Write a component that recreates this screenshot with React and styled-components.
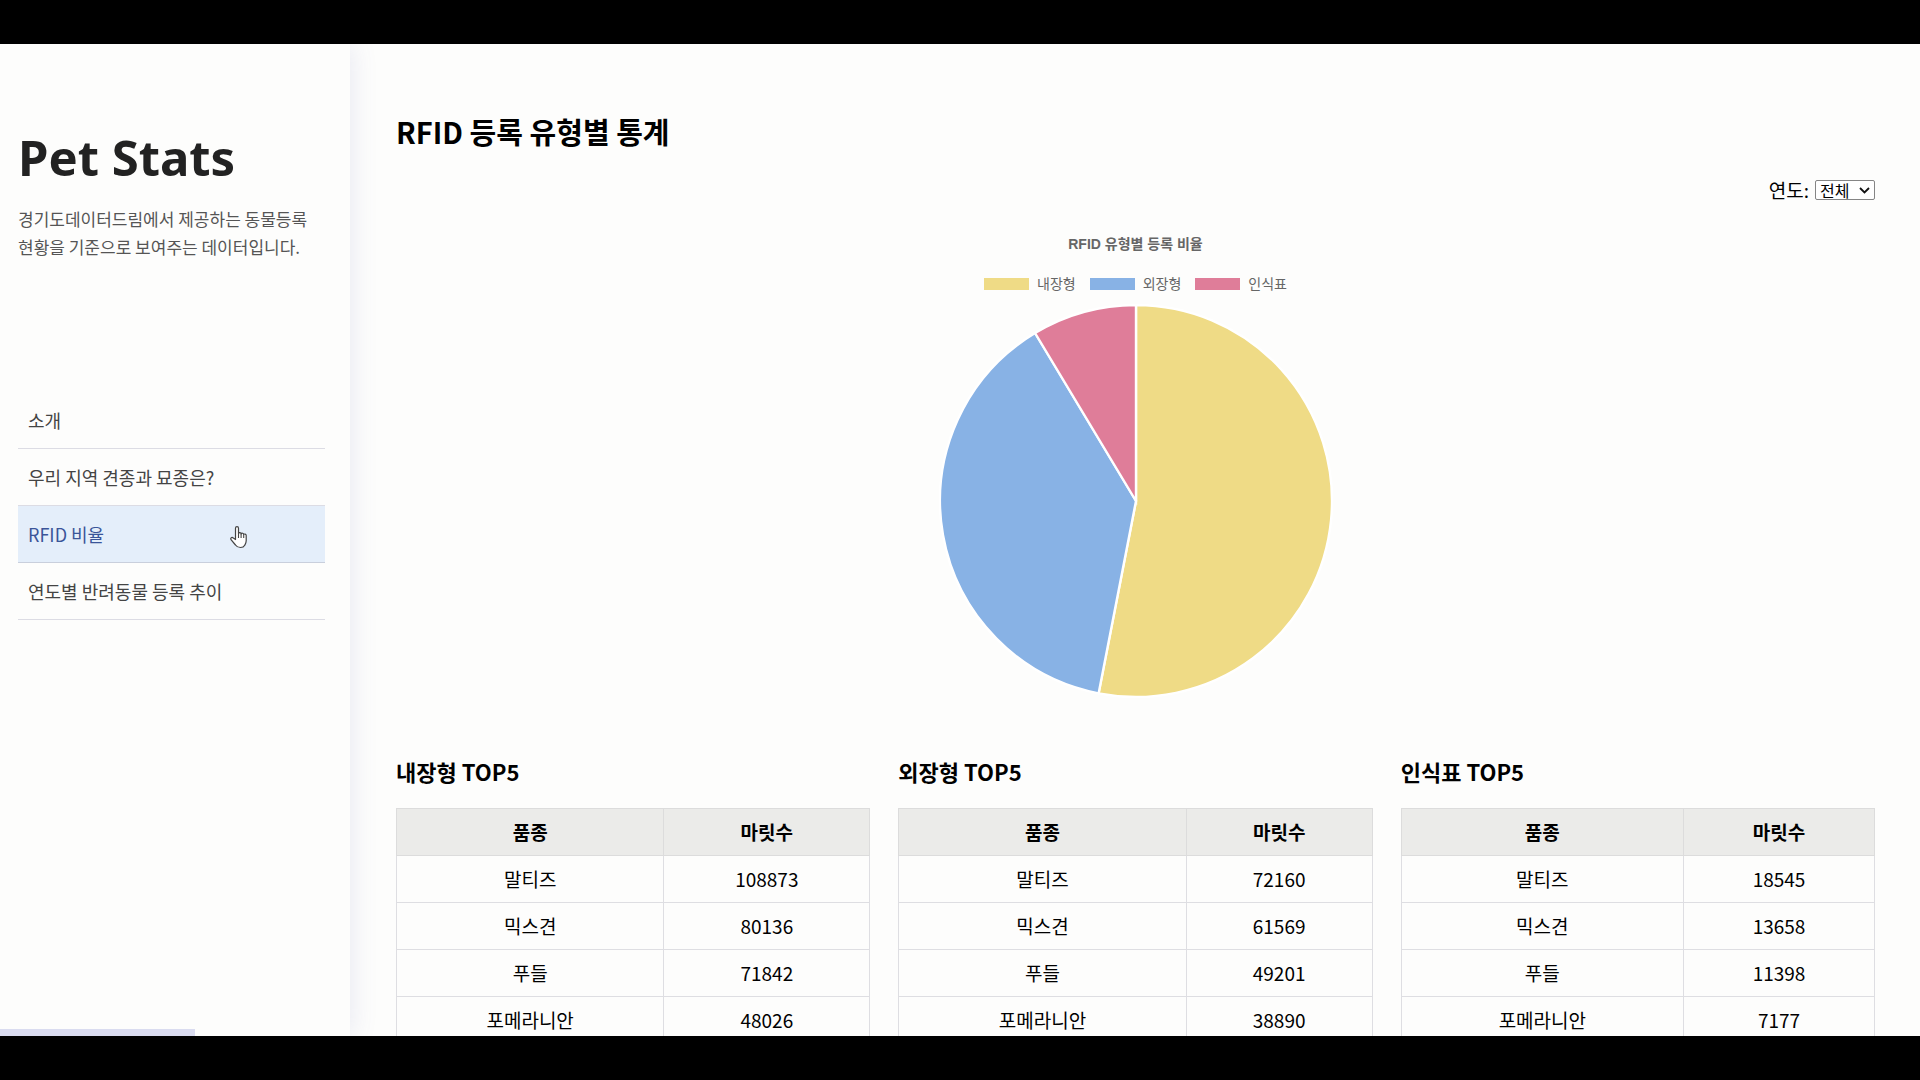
import React from "react";
import styled, { createGlobalStyle, css } from "styled-components";

const sans = '"Noto Sans CJK KR", sans-serif';
const brandSans = '"Noto Sans", sans-serif';
const chartSans = '"Liberation Sans", "Noto Sans CJK KR", sans-serif';

const GlobalStyle = createGlobalStyle`
  * { box-sizing: border-box; }
  body {
    margin: 0;
    background: #000;
    color: #000;
    font-family: ${sans};
    font-size: 19px;
    line-height: 28px;
  }
`;

const Frame = styled.div`
  height: 100vh;
  padding: 44px 0;
  background: #000;
`;

const Page = styled.div`
  position: relative;
  display: flex;
  height: 100%;
  overflow: hidden;
  background: #fdfdfc;
`;

const Sidebar = styled.aside`
  position: relative;
  flex: 0 0 350px;
  padding: 77px 25px 0 18px;
  background: #fdfdfc;
  box-shadow: 2px 0 24px rgba(90, 100, 180, 0.13);
`;

const Brand = styled.h1`
  margin: 0 0 12px;
  color: #222;
  font-family: ${brandSans};
  font-size: 49px;
  font-weight: 700;
  line-height: 72px;
`;

const Intro = styled.p`
  margin: 0 0 131px;
  color: #555;
  font-size: 17px;
  line-height: 28px;
`;

const Nav = styled.nav`
  display: flex;
  flex-direction: column;
`;

const NavLink = styled.a`
  display: block;
  padding: 14px 10px;
  border-bottom: 1px solid #dcdce4;
  color: #444;
  font-size: 18px;
  line-height: 28px;
  text-decoration: none;
  ${({ $active }) =>
    $active &&
    css`
      border-bottom-color: #c9cfdc;
      background: #e4eefa;
      color: #3a5599;
    `}
`;

const Pointer = styled.svg`
  position: absolute;
  left: 229px;
  top: 481px;
  width: 19px;
  height: 24px;
`;

const StatusBar = styled.div`
  position: absolute;
  left: 0;
  bottom: 0;
  width: 195px;
  height: 7px;
  background: #dadcf0;
`;

const Main = styled.main`
  flex: 1;
  min-width: 0;
  padding: 66px 45px 0 46px;
`;

const Title = styled.h2`
  margin: 0 0 18px;
  font-size: 29px;
  font-weight: 700;
  line-height: 42px;
`;

const Filter = styled.div`
  display: flex;
  align-items: center;
  justify-content: flex-end;
  gap: 6px;
  height: 40px;
`;

const SelectBox = styled.span`
  position: relative;
  display: flex;
`;

const YearSelect = styled.select`
  appearance: none;
  width: 60px;
  height: 20px;
  padding: 0 0 0 4px;
  border: 1px solid #858585;
  border-radius: 2px;
  background: #fff;
  color: #000;
  font-family: ${sans};
  font-size: 16px;
  line-height: 18px;
`;

const Chevron = styled.svg`
  position: absolute;
  top: 7px;
  right: 5px;
  width: 11px;
  height: 8px;
  pointer-events: none;
`;

const Chart = styled.figure`
  display: flex;
  flex-direction: column;
  align-items: center;
  margin: 0;
  padding: 24px 0 0;
  color: #666;
  font-family: ${chartSans};
  font-size: 14px;
  line-height: 20px;
`;

const ChartTitle = styled.figcaption`
  font-weight: 700;
`;

const Legend = styled.ul`
  display: flex;
  gap: 14px;
  margin: 20px 0 10px;
  padding: 0;
  list-style: none;
`;

const LegendItem = styled.li`
  display: flex;
  align-items: center;
  gap: 8px;
`;

const Swatch = styled.span`
  width: 45px;
  height: 12px;
  background: ${({ $color }) => $color};
`;

const Pie = styled.svg`
  display: block;
  width: 394px;
  height: 394px;
`;

const Rankings = styled.div`
  display: grid;
  grid-template-columns: repeat(3, 1fr);
  gap: 28px;
  padding-top: 57px;
`;

const RankingTitle = styled.h3`
  margin: 0 0 21px;
  font-size: 22px;
  font-weight: 700;
  line-height: 32px;
`;

const Table = styled.table`
  width: 100%;
  border-collapse: collapse;
  table-layout: fixed;
`;

const CountColumn = styled.col`
  width: ${({ $width }) => $width}px;
`;

const HeadCell = styled.th`
  height: 47px;
  padding: 0;
  border: 1px solid #dcdcdc;
  background: #ebebe9;
  font-weight: 700;
`;

const Cell = styled.td`
  height: 47px;
  padding: 0;
  border: 1px solid #dedee2;
  text-align: center;
`;

const menu = ["소개", "우리 지역 견종과 묘종은?", "RFID 비율", "연도별 반려동물 등록 추이"];

const segments = [
  { label: "내장형", color: "#efdb86", from: 0, to: 191 },
  { label: "외장형", color: "#88b2e5", from: 191, to: 329 },
  { label: "인식표", color: "#df7d99", from: 329, to: 360 },
];

const rankings = [
  {
    type: "내장형",
    countWidth: 206,
    rows: [["말티즈", 108873], ["믹스견", 80136], ["푸들", 71842], ["포메라니안", 48026]],
  },
  {
    type: "외장형",
    countWidth: 186,
    rows: [["말티즈", 72160], ["믹스견", 61569], ["푸들", 49201], ["포메라니안", 38890]],
  },
  {
    type: "인식표",
    countWidth: 191,
    rows: [["말티즈", 18545], ["믹스견", 13658], ["푸들", 11398], ["포메라니안", 7177]],
  },
];

function slicePath({ from, to }) {
  const point = (deg) => {
    const a = (deg * Math.PI) / 180;
    return `${197 + 196 * Math.sin(a)} ${197 - 196 * Math.cos(a)}`;
  };
  return `M197 197 L${point(from)} A196 196 0 ${to - from > 180 ? 1 : 0} 1 ${point(to)} Z`;
}

export default function App() {
  return (
    <Frame>
      <GlobalStyle />
      <Page>
        <Sidebar>
          <Brand>Pet Stats</Brand>
          <Intro>
            경기도데이터드림에서 제공하는 동물등록
            <br />
            현황을 기준으로 보여주는 데이터입니다.
          </Intro>
          <Nav>
            {menu.map((item) => (
              <NavLink key={item} href="#" $active={item === "RFID 비율"}>
                {item}
              </NavLink>
            ))}
          </Nav>
          <Pointer viewBox="0 0 19 24" aria-hidden="true">
            <path
              d="M6.5 14.5V3.2c0-2.2 3-2.2 3 0v5.3c.3-1.300 2.500-1.100 2.600.4.500-1.100 2.500-.8 2.600.6.600-.9 2.500-.5 2.500 1.100v5.200c0 2-.8 3.200-1.500 4.500-.7 1.400-1.900 2.200-4.200 2.200-2.400 0-3.800-.7-5-2.500L2 14.700c-1-1.700.9-3 2.300-1.700z"
              fill="#fff"
              stroke="#444"
              strokeWidth="1.200"
              strokeLinejoin="round"
            />
            <path d="M9.500 8.500v4.500M12.100 9v4M14.700 9.800v3.200" fill="none" stroke="#444" strokeWidth="1.100" />
          </Pointer>
        </Sidebar>
        <Main>
          <Title>RFID 등록 유형별 통계</Title>
          <Filter>
            <label htmlFor="year">연도:</label>
            <SelectBox>
              <YearSelect id="year" defaultValue="all">
                <option value="all">전체</option>
              </YearSelect>
              <Chevron viewBox="0 0 11 8" aria-hidden="true">
                <path d="M1 1l4.500 4.500L10 1" fill="none" stroke="#111" strokeWidth="1.800" />
              </Chevron>
            </SelectBox>
          </Filter>
          <Chart>
            <ChartTitle>RFID 유형별 등록 비율</ChartTitle>
            <Legend>
              {segments.map(({ label, color }) => (
                <LegendItem key={label}>
                  <Swatch $color={color} />
                  {label}
                </LegendItem>
              ))}
            </Legend>
            <Pie viewBox="0 0 394 394" aria-hidden="true">
              {segments.map((s) => (
                <path key={s.label} d={slicePath(s)} fill={s.color} stroke="#fff" strokeWidth="2.400" />
              ))}
            </Pie>
          </Chart>
          <Rankings>
            {rankings.map(({ type, countWidth, rows }) => (
              <section key={type}>
                <RankingTitle>{type} TOP5</RankingTitle>
                <Table>
                  <colgroup>
                    <col />
                    <CountColumn $width={countWidth} />
                  </colgroup>
                  <thead>
                    <tr>
                      <HeadCell scope="col">품종</HeadCell>
                      <HeadCell scope="col">마릿수</HeadCell>
                    </tr>
                  </thead>
                  <tbody>
                    {rows.map(([breed, count]) => (
                      <tr key={breed}>
                        <Cell>{breed}</Cell>
                        <Cell>{count}</Cell>
                      </tr>
                    ))}
                  </tbody>
                </Table>
              </section>
            ))}
          </Rankings>
        </Main>
        <StatusBar />
      </Page>
    </Frame>
  );
}
